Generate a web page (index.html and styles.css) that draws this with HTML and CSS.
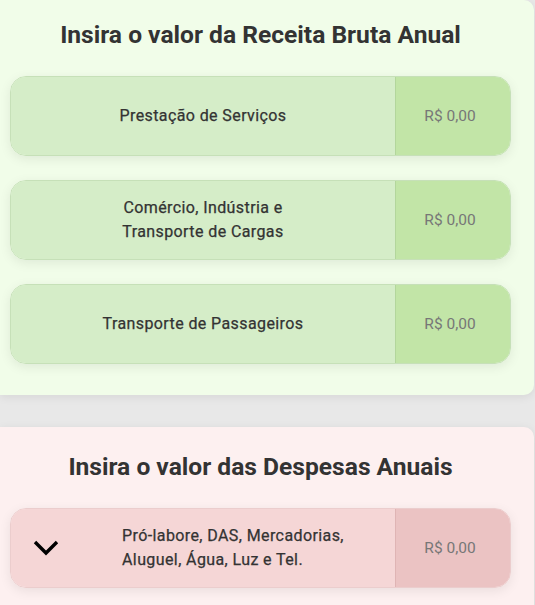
FILE: index.html
```html
<!DOCTYPE html>
<html>
<head>
    <meta charset="utf-8">
    <title>Simulador Simples Nacional</title>
    <link rel="stylesheet" href="styles.css">
</head>
<body>
    <section class="card receita">
        <h2 class="card-title">Insira o valor da Receita Bruta Anual</h2>

        <div class="row">
            <div class="row-label">Prestação de Serviços</div>
            <div class="row-value">R$ 0,00</div>
        </div>

        <div class="row">
            <div class="row-label">Comércio, Indústria e<br>Transporte de Cargas</div>
            <div class="row-value">R$ 0,00</div>
        </div>

        <div class="row">
            <div class="row-label">Transporte de Passageiros</div>
            <div class="row-value">R$ 0,00</div>
        </div>
    </section>

    <section class="card despesa">
        <h2 class="card-title">Insira o valor das Despesas Anuais</h2>

        <div class="row">
            <div class="row-label row-label-left">
                <span class="toggle">
                    <svg width="26" height="16" viewBox="0 0 26 16">
                        <polyline points="2,2 13,13 24,2" fill="none" stroke="#000" stroke-width="3.4"/>
                    </svg>
                </span>
                <span class="label-text">Pró-labore, DAS, Mercadorias,<br>Aluguel, Água, Luz e Tel.</span>
            </div>
            <div class="row-value">R$ 0,00</div>
        </div>
    </section>
</body>
</html>
```

FILE: styles.css
```css
body {
    margin: 0;
    background: #e8e8e8;
    font-family: Roboto, "Liberation Sans", sans-serif;
    color: #333;
}

.card {
    width: 501px;
    padding: 0 23px 31px 10px;
    border-radius: 0 10px 10px 0;
    box-shadow: 0 2px 10px rgba(0, 0, 0, 0.08);
}
.receita {
    background: #f1fde9;
}
.despesa {
    margin-top: 32px;
    background: #fdf0f0;
    border-radius: 0 10px 0 0;
}

.card-title {
    margin: 0;
    padding: 20px 0 26px;
    font-size: 24.6px;
    line-height: 30px;
    font-weight: 700;
    text-align: center;
    color: #333;
}
.despesa .card-title {
    padding-top: 25px;
}

.row {
    display: flex;
    height: 80px;
    margin-bottom: 24px;
    border-radius: 16px;
    overflow: hidden;
    box-sizing: border-box;
    border: 1px solid #c6e0b8;
    box-shadow: 0 3px 12px rgba(0, 0, 0, 0.08);
}
.row:last-child {
    margin-bottom: 0;
}
.row-label {
    flex: 1;
    display: flex;
    align-items: center;
    justify-content: center;
    text-align: center;
    font-size: 16px;
    font-weight: 400;
    line-height: 24px;
    letter-spacing: 0.4px;
    color: #333;
    -webkit-text-stroke: 0.25px #333;
    background: #d5edc8;
}
.row-value {
    width: 115px;
    display: flex;
    align-items: center;
    justify-content: center;
    padding-right: 6px;
    box-sizing: border-box;
    font-size: 15.5px;
    color: #777;
    background: #c2e5a7;
    border-left: 1px solid #b3d69c;
}

.despesa .row {
    border-color: #ebcdcd;
}
.despesa .row-label {
    background: #f5d6d6;
}
.despesa .row-value {
    background: #ebc3c3;
    border-left-color: #dfb4b4;
}

.row-label-left {
    justify-content: flex-start;
    text-align: left;
}
.toggle {
    width: 70px;
    display: flex;
    justify-content: center;
}
.toggle svg {
    display: block;
}
.label-text {
    padding-left: 41px;
}
```
